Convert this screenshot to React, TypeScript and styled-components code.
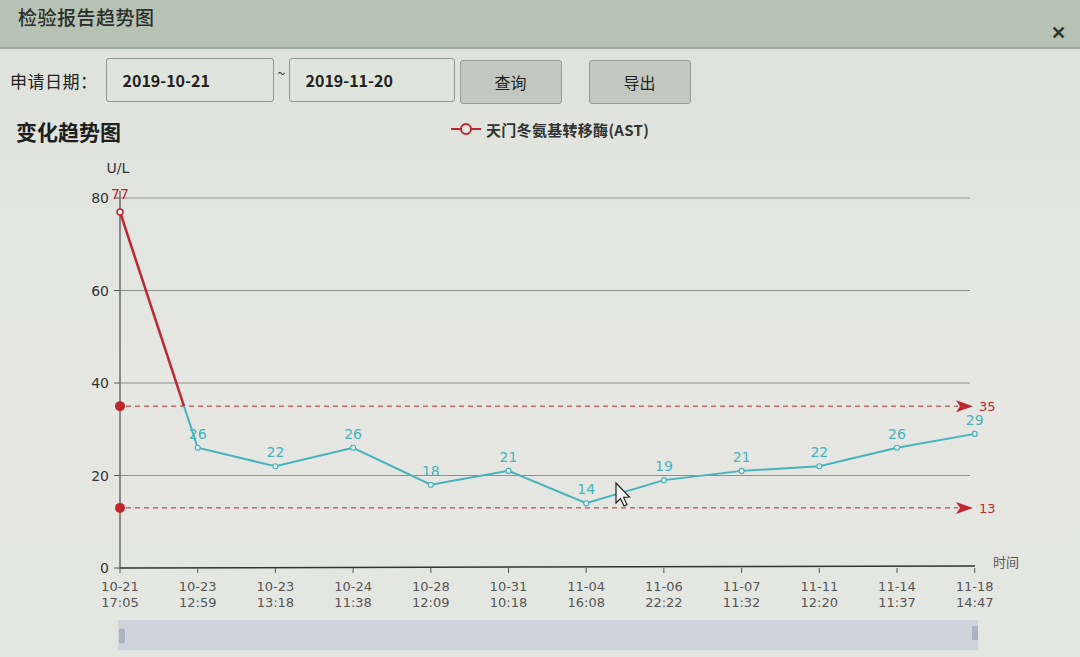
import React from "react"
import styled, { createGlobalStyle } from "styled-components"

const GlobalStyle = createGlobalStyle`
  html, body { margin: 0; padding: 0; }
  body {
    background: #dde2da;
    font-family: "Noto Sans CJK SC", "Liberation Sans", sans-serif;
  }
`

// chart data
const points = [
  { v: 77, d: "10-21", t: "17:05" },
  { v: 26, d: "10-23", t: "12:59" },
  { v: 22, d: "10-23", t: "13:18" },
  { v: 26, d: "10-24", t: "11:38" },
  { v: 18, d: "10-28", t: "12:09" },
  { v: 21, d: "10-31", t: "10:18" },
  { v: 14, d: "11-04", t: "16:08" },
  { v: 19, d: "11-06", t: "22:22" },
  { v: 21, d: "11-07", t: "11:32" },
  { v: 22, d: "11-11", t: "12:20" },
  { v: 26, d: "11-14", t: "11:37" },
  { v: 29, d: "11-18", t: "14:47" },
]

const X0 = 120
const STEP = 77.7
const Y0 = 567
const PER = 4.625
const xAt = (i: number) => X0 + i * STEP
const yAt = (v: number) => Y0 - v * PER

const RED = "#c0262e"
const TEAL = "#45b4bf"

const App: React.FC = () => {
  // split the first segment where it crosses 35
  const t = (77 - 35) / (77 - 26)
  const crossX = xAt(0) + t * STEP
  const crossY = yAt(35)
  const tealPts = [`${crossX},${crossY}`, ...points.slice(1).map((p, i) => `${xAt(i + 1)},${yAt(p.v)}`)].join(" ")

  return (
    <Page>
      <GlobalStyle />
      <TitleBar>
        <WinTitle>检验报告趋势图</WinTitle>
        <CloseBtn>✕</CloseBtn>
      </TitleBar>

      <Toolbar>
        <FieldLabel>申请日期：</FieldLabel>
        <DateInput defaultValue="2019-10-21" />
        <Tilde>~</Tilde>
        <DateInput defaultValue="2019-11-20" $w={166} />
        <ToolButton>查询</ToolButton>
        <ToolButton $gap>导出</ToolButton>
      </Toolbar>

      <ChartHead>
        <ChartTitle>变化趋势图</ChartTitle>
        <Legend>
          <svg width="32" height="14" viewBox="0 0 32 14">
            <line x1="1" y1="7" x2="31" y2="7" stroke={RED} strokeWidth="2" />
            <circle cx="16" cy="7" r="5" fill="#e6e8e3" stroke={RED} strokeWidth="2" />
          </svg>
          <LegendText>天门冬氨基转移酶(AST)</LegendText>
        </Legend>
      </ChartHead>

      <ChartSvg viewBox="0 150 1080 507" width="1080" height="507">
        {/* axis name */}
        <text x="118" y="172" fontSize="14" fill="#333" textAnchor="middle">U/L</text>

        {/* grid + y labels */}
        {[80, 60, 40, 20].map((v) => (
          <g key={v}>
            <line x1={X0} y1={yAt(v)} x2="970" y2={yAt(v)} stroke="#8c8f8c" strokeWidth="1" />
            <line x1={X0 - 6} y1={yAt(v)} x2={X0} y2={yAt(v)} stroke="#555" strokeWidth="1" />
            <text x={X0 - 11} y={yAt(v) + 5} fontSize="14" fill="#333" textAnchor="end">{v}</text>
          </g>
        ))}
        <line x1={X0 - 6} y1={Y0} x2={X0} y2={Y0} stroke="#555" strokeWidth="1" />
        <text x={X0 - 11} y={Y0 + 5} fontSize="14" fill="#333" textAnchor="end">0</text>

        {/* axes */}
        <line x1={X0} y1="190" x2={X0} y2={Y0} stroke="#6a6a6a" strokeWidth="1.5" />
        <line x1={X0} y1={Y0} x2="975" y2={Y0 - 2} stroke="#333" strokeWidth="1.5" />
        <text x="993" y="566" fontSize="13" fill="#555">时间</text>

        {/* x ticks + labels */}
        {points.map((p, i) => (
          <g key={i}>
            <line x1={xAt(i)} y1={Y0} x2={xAt(i)} y2={Y0 + 5} stroke="#555" strokeWidth="1" />
            <text x={xAt(i)} y="590" fontSize="13" fill="#555" textAnchor="middle">{p.d}</text>
            <text x={xAt(i)} y="606" fontSize="13" fill="#555" textAnchor="middle">{p.t}</text>
          </g>
        ))}

        {/* reference lines */}
        {[35, 13].map((v) => (
          <g key={v}>
            <line x1={X0 + 6} y1={yAt(v)} x2="958" y2={yAt(v)} stroke={RED} strokeWidth="1" strokeDasharray="5 4" />
            <path d={`M956 ${yAt(v) - 6} L973 ${yAt(v)} L956 ${yAt(v) + 6} L960 ${yAt(v)} Z`} fill={RED} />
            <circle cx={X0} cy={yAt(v)} r="5" fill={RED} />
            <text x="979" y={yAt(v) + 5} fontSize="13" fill={RED}>{v}</text>
          </g>
        ))}

        {/* series */}
        <line x1={xAt(0)} y1={yAt(77)} x2={crossX} y2={crossY} stroke={RED} strokeWidth="2.5" />
        <polyline points={tealPts} fill="none" stroke={TEAL} strokeWidth="2" />
        <circle cx={xAt(0)} cy={yAt(77)} r="3" fill="#eee" stroke={RED} strokeWidth="1.5" />
        <text x={xAt(0)} y={yAt(77) - 13} fontSize="14" fill={RED} textAnchor="middle">77</text>
        {points.slice(1).map((p, i) => (
          <g key={i}>
            <circle cx={xAt(i + 1)} cy={yAt(p.v)} r="2.5" fill="#eee" stroke={TEAL} strokeWidth="1.2" />
            <text x={xAt(i + 1)} y={yAt(p.v) - 9} fontSize="14" fill={TEAL} textAnchor="middle">{p.v}</text>
          </g>
        ))}

        {/* mouse pointer */}
        <path d="M616 482 L616 502 L620.5 497.5 L624 505 L627 503.6 L623.6 496.4 L629.5 496 Z" fill="#f4f4f4" stroke="#222" strokeWidth="1.2" />

        {/* data zoom slider */}
        <rect x="118" y="619" width="860" height="30" fill="#c9d0da" opacity="0.8" />
        <rect x="119" y="628" width="6" height="14" rx="1" fill="#aab3c2" />
        <rect x="972" y="625" width="6" height="14" rx="1" fill="#aab3c2" />
      </ChartSvg>
    </Page>
  )
}

const Page = styled.div`
  width: 1080px;
  height: 657px;
  overflow: hidden;
  display: flex;
  flex-direction: column;
  background: linear-gradient(180deg, #dde2da 0%, #e6e7e3 55%, #e4e6e1 100%);
`

const TitleBar = styled.div`
  height: 49px;
  flex: none;
  display: flex;
  justify-content: space-between;
  align-items: flex-start;
  padding: 3px 14px 0 18px;
  box-sizing: border-box;
  background: #b6c2b3;
  border-bottom: 2px solid #9ca89a;
`

const WinTitle = styled.div`
  font-size: 19px;
  font-weight: 500;
  color: #2b2f2b;
  letter-spacing: 0.5px;
`

const CloseBtn = styled.div`
  margin-top: 19px;
  font-size: 18px;
  font-weight: 700;
  color: #333;
  line-height: 1;
`

const Toolbar = styled.div`
  display: flex;
  align-items: center;
  height: 62px;
  padding: 0 0 0 10px;
  flex: none;
`

const FieldLabel = styled.span`
  font-size: 17px;
  color: #222;
  margin-right: 8px;
  letter-spacing: 0.5px;
`

const DateInput = styled.input<{ $w?: number }>`
  width: ${(p) => p.$w ?? 168}px;
  height: 44px;
  box-sizing: border-box;
  border: 1.5px solid #8f958e;
  border-radius: 3px;
  background: #dfe4dc;
  padding: 0 16px;
  font-family: "Noto Sans CJK SC", "Liberation Sans", sans-serif;
  font-size: 16px;
  font-weight: 600;
  color: #222;
  outline: none;
`

const Tilde = styled.span`
  width: 15px;
  font-size: 14px;
  color: #333;
  align-self: flex-start;
  margin-top: 14px;
  padding-left: 4px;
  box-sizing: border-box;
`

const ToolButton = styled.button<{ $gap?: boolean }>`
  width: 102px;
  height: 44px;
  margin-left: ${(p) => (p.$gap ? "27px" : "5px")};
  margin-top: 4px;
  border: 1.5px solid #979d96;
  border-radius: 3px;
  background: #c3c9c1;
  font-family: "Noto Sans CJK SC", sans-serif;
  font-size: 16px;
  color: #222;
`

const ChartHead = styled.div`
  height: 40px;
  flex: none;
  display: flex;
  align-items: center;
  padding-left: 16px;
`

const ChartTitle = styled.div`
  font-size: 21px;
  font-weight: 700;
  color: #1e1e1e;
  width: 434px;
`

const Legend = styled.div`
  display: flex;
  align-items: center;
  gap: 4px;
  margin-top: -4px;
`

const LegendText = styled.span`
  font-size: 15px;
  font-weight: 600;
  color: #333;
  letter-spacing: 0.3px;
`

const ChartSvg = styled.svg`
  display: block;
  flex: none;
  font-family: "DejaVu Sans", "Noto Sans CJK SC", sans-serif;
`

export default App
